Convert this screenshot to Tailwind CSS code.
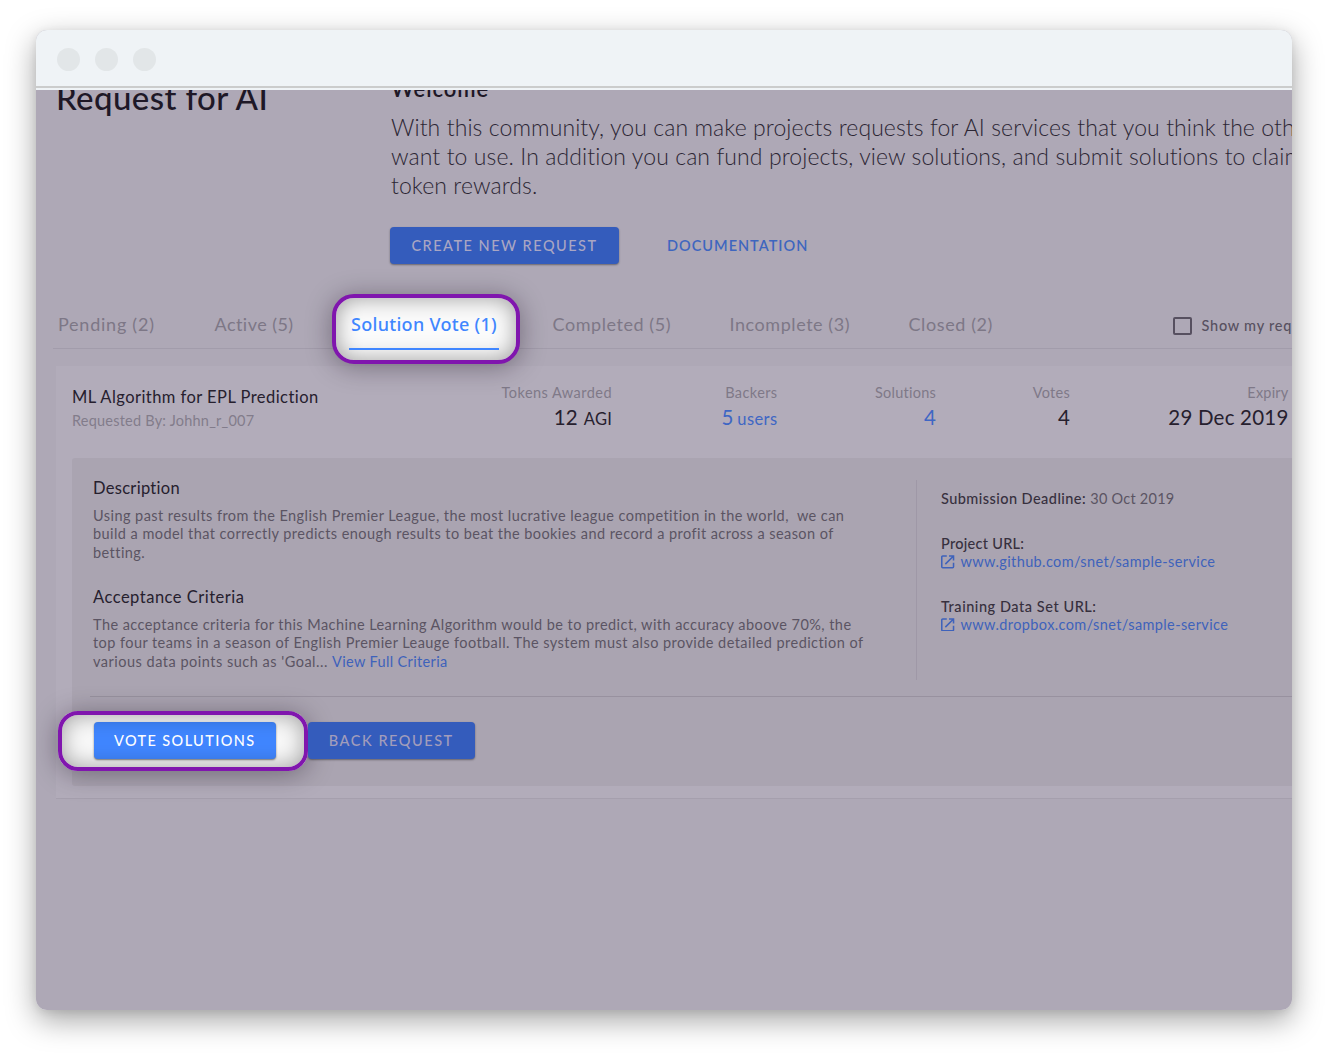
<!DOCTYPE html>
<html lang="en">
<head>
<meta charset="utf-8">
<title>Request for AI</title>
<script src="https://cdn.jsdelivr.net/npm/@tailwindcss/browser@4"></script>
</head>
<body class="h-[1054px] overflow-hidden bg-white pt-[30px] pl-9 font-['Lato',sans-serif]">
<div class="h-[980px] w-[1256px] rounded-[11px] shadow-[0_10px_30px_rgba(0,0,0,0.36),0_2px_8px_rgba(0,0,0,0.08)]">
<div class="flex h-full w-full flex-col overflow-hidden rounded-[11px] bg-[#aea8b6]">

  <!-- Title bar -->
  <header class="flex h-[60px] flex-none flex-col bg-[#eff3f6]">
    <div class="flex h-[56px] flex-none items-center gap-[15px] pt-[3px] pl-[21px]">
      <span class="size-[23px] rounded-full bg-[#e2e6e8]"></span>
      <span class="size-[23px] rounded-full bg-[#e2e6e8]"></span>
      <span class="size-[23px] rounded-full bg-[#e2e6e8]"></span>
    </div>
    <div class="h-0.5 bg-[#cbcccc]"></div>
  </header>

  <main class="flex min-h-0 w-[1500px] flex-1 flex-col overflow-hidden">
    <!-- Intro -->
    <section class="flex h-[210px] flex-none pl-5">
      <h1 class="-mt-[13px] w-[334px] text-[33px] leading-[40px] font-medium tracking-[0.4px] whitespace-nowrap text-[#1e1827]">Request for AI</h1>
      <div class="-mt-[14px]">
        <h2 class="pl-px text-[22px] leading-[26px] font-semibold tracking-[0.95px] text-[#1e1827]">Welcome</h2>
        <p class="mt-[11px] pl-px text-[23px] leading-[28.8px] font-light tracking-[0.09px] whitespace-nowrap text-[#2c2634]">With this community, you can make projects requests for AI services that you think the other<br>want to use. In addition you can fund projects, view solutions, and submit solutions to claim<br>token rewards.</p>
        <div class="mt-[27.6px] flex items-center">
          <button class="h-[37px] w-[229px] rounded-[4px] bg-[#345cbc] text-[14.5px] font-medium tracking-[1.5px] text-[#a9a6c3] shadow-[0_1px_2px_rgba(0,0,0,0.4)]">CREATE NEW REQUEST</button>
          <a class="ml-[48px] text-[14.5px] font-semibold tracking-[1px] text-[#3e66bf]">DOCUMENTATION</a>
        </div>
      </div>
    </section>

    <!-- Tabs -->
    <nav class="ml-[17px] flex h-[49px] flex-none items-center border-b border-[#a29cab] pl-[5px] text-[18px] whitespace-nowrap text-[#7d7786]">
      <span class="w-[156.5px] tracking-[0.76px]">Pending (2)</span>
      <span class="w-[136.5px] tracking-[0.46px]">Active (5)</span>
      <div class="relative w-[201.5px]">
        <span class="absolute -top-[17px] -left-[19px] h-[70px] w-[188px] rounded-[22px] border-4 border-[#8016ae] bg-[#fbfbfb] shadow-[0_3px_26px_rgba(20,10,25,0.38),inset_0_0_22px_rgba(0,0,0,0.38)]"></span>
        <span class="relative font-['Noto_Sans',sans-serif] font-medium tracking-[0.3px] text-[#4086ff]">Solution Vote (1)</span>
        <span class="absolute top-[37px] -left-[2px] h-0.5 w-[150px] bg-[#4086ff]"></span>
      </div>
      <span class="w-[177px] tracking-[0.56px]">Completed (5)</span>
      <span class="w-[179px] tracking-[0.56px]">Incomplete (3)</span>
      <span class="w-[264.5px] tracking-[0.6px]">Closed (2)</span>
      <label class="flex items-center gap-[10px] pt-1 text-[14.5px] font-medium tracking-[0.75px] text-[#575060]">
        <span class="size-[18.5px] rounded-[2px] border-2 border-[#575060]"></span>Show my requests
      </label>
    </nav>

    <!-- Request card -->
    <article class="mt-[17px] ml-5 flex h-[433px] flex-none flex-col border-b border-[#a59fad] bg-[#b2acba] pl-4">
      <div class="flex h-[91.5px] flex-none pt-[17px] whitespace-nowrap">
        <div class="w-[340px] pt-[3px]">
          <h3 class="text-[16.5px] leading-[22px] tracking-[0.45px] text-[#26202e]">ML Algorithm for EPL Prediction</h3>
          <p class="mt-px text-[14.5px] leading-[24px] tracking-[0.22px] text-[#827c8b]">Requested By: Johhn_r_007</p>
        </div>
        <div class="w-[200px] text-right">
          <p class="text-[14.5px] leading-5 tracking-[0.46px] text-[#7f7988]">Tokens Awarded</p>
          <p class="text-[20.5px] leading-7 text-[#26202e]">12 <span class="ml-px text-[16.5px] tracking-[0.2px]">AGI</span></p>
        </div>
        <div class="w-[165.5px] text-right">
          <p class="text-[14.5px] leading-5 tracking-[0.4px] text-[#7f7988]">Backers</p>
          <p class="text-[20.5px] leading-7 text-[#3e66c4]">5<span class="ml-1 text-[16.5px] tracking-[0.4px]">users</span></p>
        </div>
        <div class="w-[158.5px] text-right">
          <p class="text-[14.5px] leading-5 tracking-[0.24px] text-[#7f7988]">Solutions</p>
          <p class="text-[20.5px] leading-7 text-[#3e66c4]">4</p>
        </div>
        <div class="w-[134px] text-right">
          <p class="text-[14.5px] leading-5 tracking-[0.27px] text-[#7f7988]">Votes</p>
          <p class="text-[20.5px] leading-7 text-[#26202e]">4</p>
        </div>
        <div class="w-[218.5px] text-right">
          <p class="text-[14.5px] leading-5 tracking-[0.2px] text-[#7f7988]">Expiry</p>
          <p class="text-[20.5px] leading-7 tracking-[0.21px] text-[#26202e]">29 Dec 2019</p>
        </div>
      </div>

      <div class="flex h-[328px] flex-none flex-col rounded-l-[3px] bg-[#aaa4b1]">
        <div class="flex h-[238px] flex-none pt-[22px] whitespace-nowrap">
          <div class="h-[200px] w-[845px] border-r border-[#9f98a7] pl-[21px] text-[14.5px] leading-[18.4px] tracking-[0.44px] text-[#5b5463]">
            <h4 class="text-[16.5px] leading-[17px] tracking-[0.3px] text-[#26202e]">Description</h4>
            <p class="mt-[10.4px]">Using past results from the English Premier League, the most lucrative league competition in the world, &nbsp;we can<br>build a model that correctly predicts enough results to beat the bookies and record a profit across a season of<br>betting.</p>
            <h4 class="mt-[27.3px] text-[16.5px] leading-[17px] tracking-[0.5px] text-[#26202e]">Acceptance Criteria</h4>
            <p class="mt-[9.5px]">The acceptance criteria for this Machine Learning Algorithm would be to predict, with accuracy aboove 70%, the<br>top four teams in a season of English Premier Leauge football. The system must also provide detailed prediction of<br><span class="tracking-[0.5px]">various data points such as 'Goal...</span> <a class="tracking-[0.355px] text-[#3e62bb]">View Full Criteria</a></p>
          </div>
          <div class="pt-[10px] pl-[24px] text-[14.5px] leading-[18.5px] font-medium text-[#37303e]">
            <p class="tracking-[0.45px]">Submission Deadline: <span class="font-normal tracking-[0.25px] text-[#5b5463]">30 Oct 2019</span></p>
            <p class="mt-[26.5px] tracking-[0.28px]">Project URL:</p>
            <a class="flex items-center gap-[6px] font-normal tracking-[0.38px] text-[#3e62bb]">
              <svg class="mb-px size-[13.5px]" viewBox="0 0 14 14" fill="none" stroke="currentColor" stroke-width="1.6"><path d="M6 1H1.8a1 1 0 0 0-1 1v10.2a1 1 0 0 0 1 1H12a1 1 0 0 0 1-1V8M8.3 1H13v4.7M13 1 4.5 9.5"/></svg>www.github.com/snet/sample-service
            </a>
            <p class="mt-[26px] tracking-[0.55px]">Training Data Set URL:</p>
            <a class="flex items-center gap-[6px] font-normal tracking-[0.39px] text-[#3e62bb]">
              <svg class="mb-0.5 size-[13.5px]" viewBox="0 0 14 14" fill="none" stroke="currentColor" stroke-width="1.6"><path d="M6 1H1.8a1 1 0 0 0-1 1v10.2a1 1 0 0 0 1 1H12a1 1 0 0 0 1-1V8M8.3 1H13v4.7M13 1 4.5 9.5"/></svg>www.dropbox.com/snet/sample-service
            </a>
          </div>
        </div>
        <div class="ml-[18px] h-px flex-none bg-[#98919f]"></div>
        <div class="relative flex pt-[25px] pl-[21.5px]">
          <div class="absolute top-[14px] -left-[14px] h-[60px] w-[250px] rounded-[20px] bg-[#f8f8f8] shadow-[0_3px_26px_rgba(20,10,25,0.38)]"></div>
          <button class="relative h-[37.5px] w-[182.5px] rounded-[4px] bg-[#4086ff] pt-px text-[14.5px] font-medium tracking-[1.38px] text-white shadow-[0_1px_2px_rgba(0,0,0,0.5)]">VOTE SOLUTIONS</button>
          <button class="relative ml-8 h-[37.5px] w-[166.5px] rounded-[4px] bg-[#345cbc] pt-px text-[14.5px] font-medium tracking-[1.56px] text-[#a29dbb] shadow-[0_1px_2px_rgba(0,0,0,0.4)]">BACK REQUEST</button>
          <div class="absolute top-[14px] -left-[14px] h-[60px] w-[250px] rounded-[20px] border-4 border-[#8016ae] shadow-[inset_0_0_22px_rgba(0,0,0,0.36)]"></div>
        </div>
      </div>
    </article>
  </main>
</div>
</div>
</body>
</html>
